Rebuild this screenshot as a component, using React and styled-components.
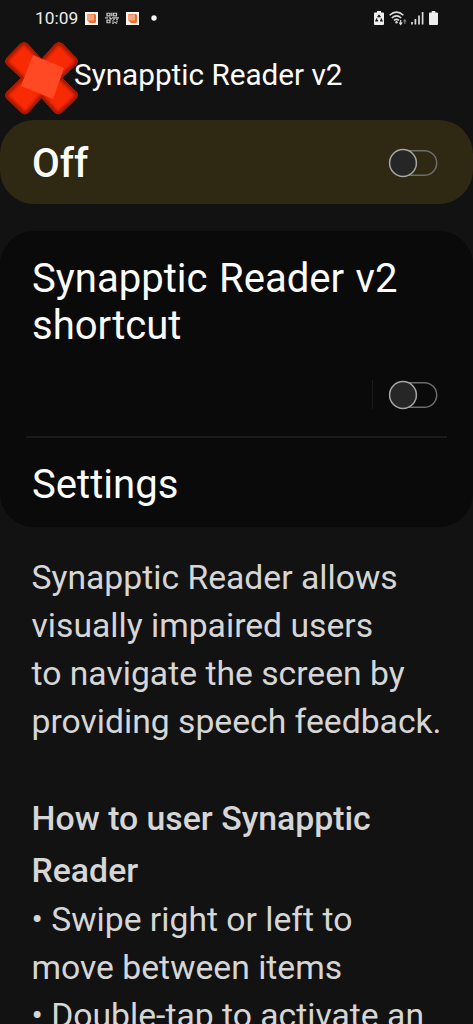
import React, { useState } from 'react';
import styled, { createGlobalStyle } from 'styled-components';

const GlobalStyle = createGlobalStyle`
  * {
    box-sizing: border-box;
  }

  body {
    margin: 0;
    background: #121212;
    overflow: hidden;
  }
`;

const Screen = styled.main`
  display: flex;
  flex-direction: column;
  width: 473px;
  height: 1024px;
  overflow: hidden;
  background: #121212;
  color: #fcfcfc;
  font-family: Roboto, sans-serif;

  > * {
    flex: none;
  }
`;

const StatusBar = styled.header`
  display: flex;
  align-items: center;
  justify-content: space-between;
  height: 36px;
  padding: 0 35px;
`;

const StatusGroup = styled.div`
  display: flex;
  align-items: center;
  gap: ${({ $gap }) => $gap}px;

  svg {
    display: block;
  }
`;

const Clock = styled.span`
  width: 43px;
  font-size: 17.4px;
  line-height: 36px;
  color: #ececec;
`;

const TitleBar = styled.div`
  display: flex;
  align-items: center;
  height: 84.4px;
  padding: 0 0 0 4px;

  svg {
    display: block;
    flex: none;
  }
`;

const Title = styled.h1`
  margin: -7px 0 0 -5px;
  font-size: 29.7px;
  font-weight: 400;
  line-height: 36px;
  white-space: nowrap;
`;

const MainSwitch = styled.section`
  display: flex;
  align-items: center;
  justify-content: space-between;
  height: 84px;
  padding: 1px 35px 0 32px;
  border-radius: 34px;
  background: #2f2813;
`;

const MainLabel = styled.span`
  margin-top: 3px;
  font-size: 40.4px;
  font-weight: 500;
  line-height: 48px;
`;

const Card = styled.section`
  display: flex;
  flex-direction: column;
  height: 296px;
  margin-top: 26.3px;
  border-radius: 34px;
  background: #0a0a0a;
`;

const ShortcutRow = styled.div`
  height: 205px;
  padding: 24px 35px 0 32px;
`;

const RowLabel = styled.div`
  font-size: 40.1px;
  line-height: 47px;
  word-spacing: 1.5px;
`;

const SwitchLine = styled.div`
  display: flex;
  align-items: center;
  justify-content: flex-end;
  gap: 15px;
  height: 30px;
  margin-top: 31px;
`;

const VerticalRule = styled.i`
  width: 1px;
  height: 29px;
  background: #1b1b1b;
`;

const Divider = styled.hr`
  width: 421px;
  height: 2px;
  margin: 0 auto;
  border: 0;
  background: #1a1a1a;
`;

const SettingsRow = styled.div`
  padding: 23px 32px 0;
`;

const Toggle = styled.button`
  display: block;
  padding: 0;
  border: 0;
  background: none;

  svg {
    display: block;
  }
`;

const Description = styled.article`
  padding: 27px 0 0 31.5px;
  color: #d6d6d6;
  font-size: 33.7px;
  line-height: 48.2px;
  white-space: nowrap;
`;

const Paragraph = styled.p`
  margin: 0;
`;

const Heading = styled.h2`
  margin: 46px 0 -1px;
  font-size: 33.8px;
  font-weight: 500;
  line-height: 52px;
`;

function Switch({ label }) {
  const [on, setOn] = useState(false);

  return (
    <Toggle role="switch" aria-checked={on} aria-label={label} onClick={() => setOn(!on)}>
      <svg width="50" height="30" viewBox="0 0 50 30" fill="none">
        <rect x="2" y="2.7" width="46.7" height="24.6" rx="12.3" stroke="#6c6c6c" strokeWidth="1.5" />
        <circle cx={on ? 35 : 15} cy="15" r="13.4" fill="#262626" stroke="#a6a6a6" strokeWidth="1.5" />
      </svg>
    </Toggle>
  );
}

function AppNotification() {
  return (
    <svg width="13" height="13" viewBox="0 0 13 13">
      <rect width="13" height="13" fill="#f8f4f0" />
      <path d="M3 2h7l1 1v7l-1 1H5l-3-3V3z" fill="#ee6c30" />
      <path d="M2 2.5h7v6H4.5L2 8z" fill="#f5a582" />
    </svg>
  );
}

function QrCode() {
  return (
    <svg width="14" height="12" viewBox="0 0 14 14" preserveAspectRatio="none" fill="none" stroke="#c4c4c4" strokeWidth="1.3">
      <path d="M2 1.5h3v3H2zM8.5 1.5h3v3h-3zM2 9.5h3v3H2z" />
      <path d="M0 6.8h3M4 6.8h2M7 6.8h7M6.8 1v4M8 8.5h2M11 8.5h2M7 10.5h2M9 11.5l3 2M12 10v2M7 13h2M5 8h2" />
    </svg>
  );
}

function BatterySaver() {
  return (
    <svg width="10" height="14" viewBox="0 0 10 14">
      <path d="M3 0h4v1.5h2q1 0 1 1V13q0 1-1 1H1q-1 0-1-1V2.5q0-1 1-1h2z" fill="#f0f0f0" />
      <path d="M3.6 6.3 5 4.5l1.4 1.8M7 7.5l1 2.2H6.1M4.1 9.7H2l1-2.2" fill="none" stroke="#1c1c1c" strokeWidth="1.4" />
    </svg>
  );
}

function Wifi() {
  return (
    <svg width="18" height="15" viewBox="0 0 18 15" fill="none" stroke="#dedede" strokeWidth="1.5">
      <path d="M.6 4.3q6.9-6.4 13.8 0M2.8 7q4.7-4.2 9.4 0M5 9.4q2.5-2.1 5 0" />
      <circle cx="7.5" cy="11.3" r="1.2" fill="#dedede" stroke="none" />
      <path d="M11.7 9v3.7M10.2 11.5l1.5 2 1.5-2" strokeWidth="1.2" />
      <path d="M15.8 13V9.3M14.5 10.5l1.3-1.8 1.3 1.8" stroke="#7f7f7f" strokeWidth="1.1" />
    </svg>
  );
}

function Signal() {
  return (
    <svg width="13" height="14" viewBox="0 0 13 14" stroke="#dcdcdc" strokeWidth="1.7">
      <path d="M1 11v2.5M4.4 8v5.5M8 4.5v9M11.6 1v12.5" />
    </svg>
  );
}

function Battery() {
  return (
    <svg width="9" height="14" viewBox="0 0 9 14">
      <path d="M2.7 0h3.6v1.6H8q1 0 1 1V13q0 1-1 1H1q-1 0-1-1V2.6q0-1 1-1h1.7z" fill="#efefef" />
    </svg>
  );
}

function CrossLogo() {
  const cross =
    'M16 3Q20 -.5 24 3L37.5 18 51 3Q55 -.5 59 3L72 16.5Q75.5 20.5 72 24L58 37 72 50.5Q75.5 54 72 58L58 71.5Q54 75 50.5 71.5L37.5 57 24.5 71.5Q21 75 17 71.5L3 58Q-.5 54 3 50.5L17 37 3 24Q-.5 20.5 3 16.5Z';

  return (
    <svg width="75" height="75" viewBox="0 0 75 75">
      <defs>
        <clipPath id="cross">
          <path d={cross} />
        </clipPath>
        <filter id="soft">
          <feGaussianBlur stdDeviation="1.6" />
        </filter>
      </defs>
      <path d={cross} fill="#f82a04" />
      <g clipPath="url(#cross)">
        <path d={cross} fill="none" stroke="#a01200" strokeWidth="6" filter="url(#soft)" />
        <path d="M29 14 60 27 49 58 17 45z" fill="#ff4924" />
      </g>
    </svg>
  );
}

function App() {
  return (
    <>
      <GlobalStyle />
      <Screen>
        <StatusBar>
          <StatusGroup $gap={7}>
            <Clock>10:09</Clock>
            <AppNotification />
            <QrCode />
            <AppNotification />
            <svg width="16" height="6" viewBox="0 0 16 6">
              <circle cx="8" cy="3" r="2.7" fill="#f4f4f4" />
            </svg>
          </StatusGroup>
          <StatusGroup $gap={4.7}>
            <BatterySaver />
            <Wifi />
            <Signal />
            <Battery />
          </StatusGroup>
        </StatusBar>

        <TitleBar>
          <CrossLogo />
          <Title>Synapptic Reader v2</Title>
        </TitleBar>

        <MainSwitch>
          <MainLabel>Off</MainLabel>
          <Switch label="Synapptic Reader v2" />
        </MainSwitch>

        <Card>
          <ShortcutRow>
            <RowLabel>
              Synapptic Reader v2
              <br />
              shortcut
            </RowLabel>
            <SwitchLine>
              <VerticalRule />
              <Switch label="Synapptic Reader v2 shortcut" />
            </SwitchLine>
          </ShortcutRow>
          <Divider />
          <SettingsRow>
            <RowLabel>Settings</RowLabel>
          </SettingsRow>
        </Card>

        <Description>
          <Paragraph>
            Synapptic Reader allows
            <br />
            visually impaired users
            <br />
            to navigate the screen by
            <br />
            providing speech feedback.
          </Paragraph>
          <Heading>
            How to user Synapptic
            <br />
            Reader
          </Heading>
          <Paragraph>
            • Swipe right or left to
            <br />
            move between items
            <br />
            • Double-tap to activate an
          </Paragraph>
        </Description>
      </Screen>
    </>
  );
}

export default App;
